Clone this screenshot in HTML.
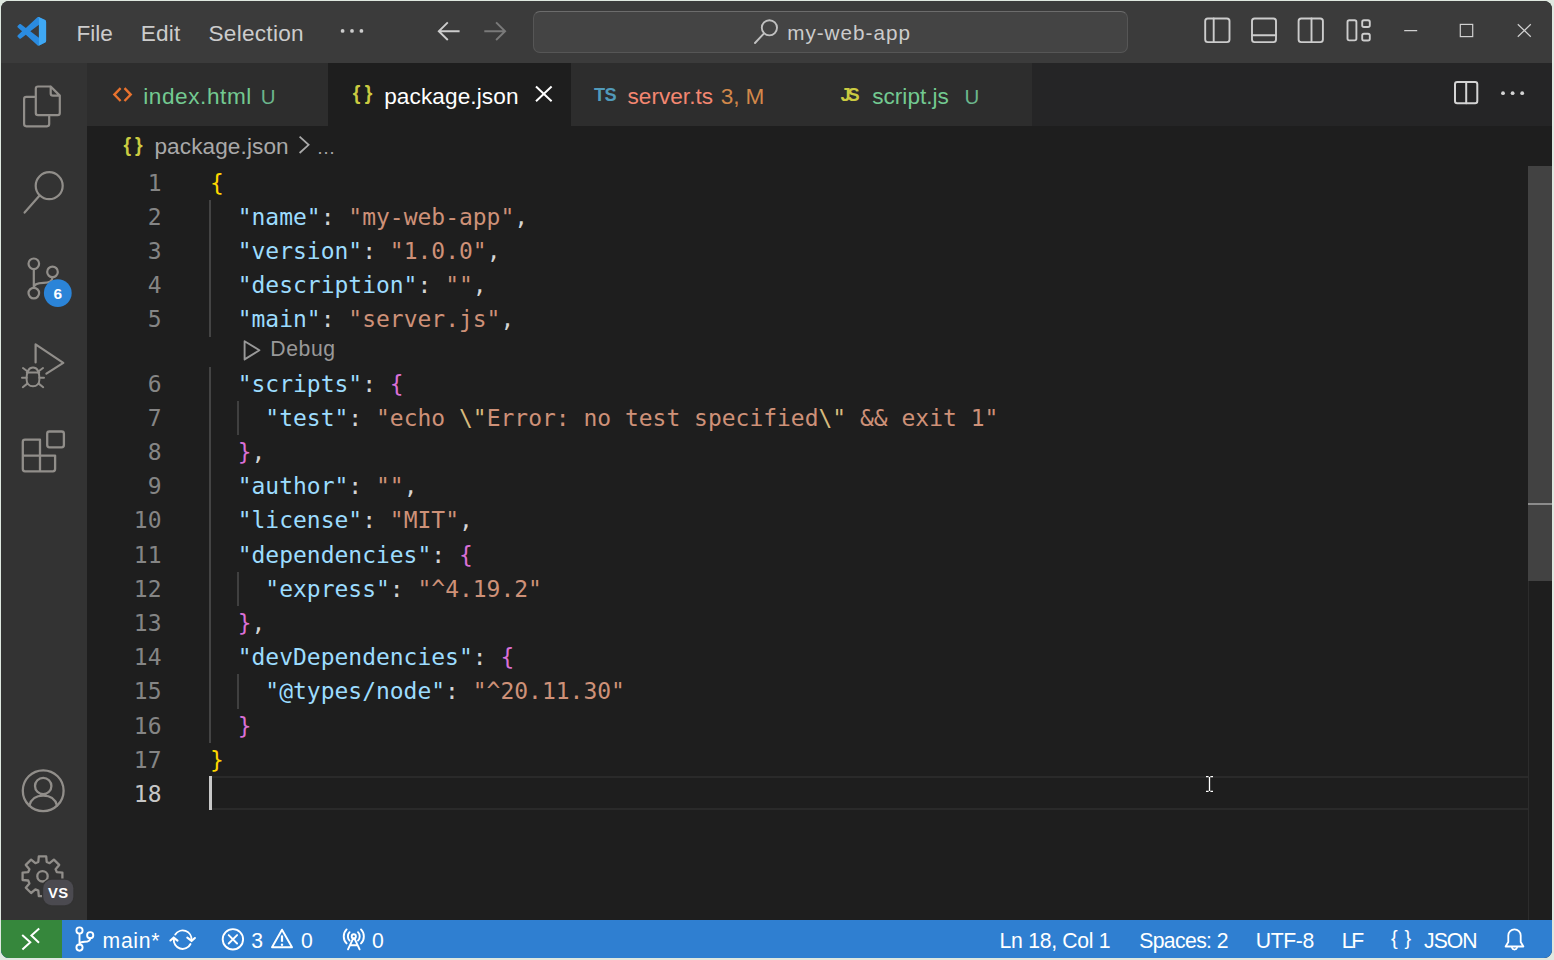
<!DOCTYPE html>
<html lang="en"><head><meta charset="utf-8"><title>package.json - my-web-app - Visual Studio Code</title>
<style>
html,body{margin:0;padding:0}
body{width:1554px;height:960px;overflow:hidden;position:relative;background:#dfe8e0;font-family:'Liberation Sans', sans-serif}
#win{position:absolute;left:1.3px;top:1.2px;width:1550.6px;height:956.6px;border-radius:8px;overflow:hidden;background:#1e1e1e}
#page{position:absolute;left:-1.3px;top:-1.2px;width:1554px;height:960px}
.b{position:absolute}
.t{position:absolute;white-space:pre;line-height:1;margin:0}
.ln{position:absolute;left:100px;width:61.5px;text-align:right;font-family:'DejaVu Sans Mono', 'Liberation Mono', monospace;font-size:22.97px;color:#858585;line-height:34.2px;height:34.2px;white-space:pre}
.cl{position:absolute;left:210px;font-family:'DejaVu Sans Mono', 'Liberation Mono', monospace;font-size:22.97px;line-height:34.2px;height:34.2px;white-space:pre;color:#d4d4d4;letter-spacing:0px}
svg{position:absolute;overflow:visible}
</style></head><body>
<div id="win"><div id="page">
<div class="b" style="left:0;top:0;width:1554px;height:63px;background:#3b3b3b"></div>
<div class="b" style="left:0;top:63px;width:87px;height:857px;background:#333333"></div>
<div class="b" style="left:87px;top:63px;width:1467px;height:63px;background:#252526"></div>
<div class="b" style="left:87px;top:63px;width:944.5px;height:63px;background:#2d2d2d"></div>
<div class="b" style="left:328px;top:63px;width:242.5px;height:63px;background:#1e1e1e"></div>
<div class="b" style="left:0;top:919.6px;width:1554px;height:41px;background:#2f7fd1"></div>
<div class="b" style="left:0;top:919.6px;width:62px;height:41px;background:#36873c"></div>
<div class="b" style="left:533px;top:11px;width:593px;height:39.5px;border:1px solid #565656;border-top-color:#6c6c6c;border-radius:7px;background:#444444;box-sizing:content-box"></div>
<div class="b" style="left:1528px;top:165.6px;width:1px;height:754px;background:#2c2c2c"></div>
<div class="b" style="left:1528px;top:165.6px;width:26px;height:415.5px;background:#424242"></div>
<div class="b" style="left:1528px;top:503px;width:26px;height:2px;background:#8c8c8c"></div>
<div class="b" style="left:210px;top:776.4px;width:1318px;height:33.2px;border-top:2px solid #2a2a2a;border-bottom:2px solid #2a2a2a;box-sizing:border-box"></div>
<div class="b" style="left:209px;top:776.4px;width:3px;height:33.2px;background:#c8c8c8"></div>
<div class="b" style="left:209.3px;top:199.8px;width:2px;height:136.8px;background:#444444"></div>
<div class="b" style="left:209.3px;top:366.6px;width:2px;height:376.2px;background:#444444"></div>
<div class="b" style="left:237.2px;top:400.8px;width:2px;height:34.2px;background:#404040"></div>
<div class="b" style="left:237.2px;top:571.8px;width:2px;height:34.2px;background:#404040"></div>
<div class="b" style="left:237.2px;top:674.4px;width:2px;height:34.2px;background:#404040"></div>
<div class="ln" style="top:165.6px">1</div>
<div class="cl" style="top:165.6px"><span style="color:#ffd700">{</span></div>
<div class="ln" style="top:199.8px">2</div>
<div class="cl" style="top:199.8px"><span style="color:#d4d4d4">  </span><span style="color:#9cdcfe">"name"</span><span style="color:#d4d4d4">: </span><span style="color:#ce9178">"my-web-app"</span><span style="color:#d4d4d4">,</span></div>
<div class="ln" style="top:234.0px">3</div>
<div class="cl" style="top:234.0px"><span style="color:#d4d4d4">  </span><span style="color:#9cdcfe">"version"</span><span style="color:#d4d4d4">: </span><span style="color:#ce9178">"1.0.0"</span><span style="color:#d4d4d4">,</span></div>
<div class="ln" style="top:268.2px">4</div>
<div class="cl" style="top:268.2px"><span style="color:#d4d4d4">  </span><span style="color:#9cdcfe">"description"</span><span style="color:#d4d4d4">: </span><span style="color:#ce9178">""</span><span style="color:#d4d4d4">,</span></div>
<div class="ln" style="top:302.4px">5</div>
<div class="cl" style="top:302.4px"><span style="color:#d4d4d4">  </span><span style="color:#9cdcfe">"main"</span><span style="color:#d4d4d4">: </span><span style="color:#ce9178">"server.js"</span><span style="color:#d4d4d4">,</span></div>
<div class="ln" style="top:366.6px">6</div>
<div class="cl" style="top:366.6px"><span style="color:#d4d4d4">  </span><span style="color:#9cdcfe">"scripts"</span><span style="color:#d4d4d4">: </span><span style="color:#da70d6">{</span></div>
<div class="ln" style="top:400.8px">7</div>
<div class="cl" style="top:400.8px"><span style="color:#d4d4d4">    </span><span style="color:#9cdcfe">"test"</span><span style="color:#d4d4d4">: </span><span style="color:#ce9178">"echo </span><span style="color:#d7ba7d">\"</span><span style="color:#ce9178">Error: no test specified</span><span style="color:#d7ba7d">\"</span><span style="color:#ce9178"> &amp;&amp; exit 1"</span></div>
<div class="ln" style="top:435.0px">8</div>
<div class="cl" style="top:435.0px"><span style="color:#d4d4d4">  </span><span style="color:#da70d6">}</span><span style="color:#d4d4d4">,</span></div>
<div class="ln" style="top:469.2px">9</div>
<div class="cl" style="top:469.2px"><span style="color:#d4d4d4">  </span><span style="color:#9cdcfe">"author"</span><span style="color:#d4d4d4">: </span><span style="color:#ce9178">""</span><span style="color:#d4d4d4">,</span></div>
<div class="ln" style="top:503.4px">10</div>
<div class="cl" style="top:503.4px"><span style="color:#d4d4d4">  </span><span style="color:#9cdcfe">"license"</span><span style="color:#d4d4d4">: </span><span style="color:#ce9178">"MIT"</span><span style="color:#d4d4d4">,</span></div>
<div class="ln" style="top:537.6px">11</div>
<div class="cl" style="top:537.6px"><span style="color:#d4d4d4">  </span><span style="color:#9cdcfe">"dependencies"</span><span style="color:#d4d4d4">: </span><span style="color:#da70d6">{</span></div>
<div class="ln" style="top:571.8px">12</div>
<div class="cl" style="top:571.8px"><span style="color:#d4d4d4">    </span><span style="color:#9cdcfe">"express"</span><span style="color:#d4d4d4">: </span><span style="color:#ce9178">"^4.19.2"</span></div>
<div class="ln" style="top:606.0px">13</div>
<div class="cl" style="top:606.0px"><span style="color:#d4d4d4">  </span><span style="color:#da70d6">}</span><span style="color:#d4d4d4">,</span></div>
<div class="ln" style="top:640.2px">14</div>
<div class="cl" style="top:640.2px"><span style="color:#d4d4d4">  </span><span style="color:#9cdcfe">"devDependencies"</span><span style="color:#d4d4d4">: </span><span style="color:#da70d6">{</span></div>
<div class="ln" style="top:674.4px">15</div>
<div class="cl" style="top:674.4px"><span style="color:#d4d4d4">    </span><span style="color:#9cdcfe">"@types/node"</span><span style="color:#d4d4d4">: </span><span style="color:#ce9178">"^20.11.30"</span></div>
<div class="ln" style="top:708.6px">16</div>
<div class="cl" style="top:708.6px"><span style="color:#d4d4d4">  </span><span style="color:#da70d6">}</span></div>
<div class="ln" style="top:742.8px">17</div>
<div class="cl" style="top:742.8px"><span style="color:#ffd700">}</span></div>
<div class="ln" style="top:777.0px;color:#c6c6c6">18</div>
<svg width="1554" height="960" viewBox="0 0 1554 960" style="left:0;top:0" fill="none" stroke-linecap="round" stroke-linejoin="round">
<g transform="translate(17.4 17) scale(0.287)">
<path fill="#2a8be0" fill-rule="evenodd" d="M70.9 99.3C72.5 99.9 74.3 99.9 75.9 99.1L96.5 89.2C98.6 88.2 100 86 100 83.6V16.4C100 14 98.6 11.8 96.5 10.8L75.9 0.9C73.8 -0.1 71.3 0.1 69.5 1.4C69.3 1.6 69 1.8 68.8 2.1L29.4 38L12.2 25C10.6 23.8 8.4 23.9 6.9 25.2L1.4 30.3C-0.5 31.9 -0.5 34.8 1.4 36.4L16.2 50L1.4 63.6C-0.5 65.2 -0.5 68.1 1.4 69.7L6.9 74.8C8.4 76.1 10.6 76.2 12.2 75L29.4 62L68.8 97.9C69.4 98.5 70.1 99 70.9 99.3ZM75 27.3L45.1 50L75 72.7V27.3Z"/>
<path fill="#3fa8f4" d="M75.9 0.9L96.5 10.8C98.6 11.8 100 14 100 16.4V83.6C100 86 98.6 88.2 96.5 89.2L75.9 99.1C73.9 100.1 71.5 99.8 69.8 98.4C72 99.6 75 98.3 75 95.4V4.6C75 1.7 72 0.4 69.6 1.5C71.4 0.1 73.8 -0.1 75.9 0.9Z"/>
</g>
<circle cx="342.6" cy="30.9" r="1.9" fill="#cccccc"/>
<circle cx="352" cy="30.9" r="1.9" fill="#cccccc"/>
<circle cx="361.4" cy="30.9" r="1.9" fill="#cccccc"/>
<path stroke="#cccccc" stroke-width="1.9" stroke-linecap="butt" stroke-linejoin="miter" d="M459.6 31.2H439.5M447.8 22.4L438.8 31.2L447.8 40"/>
<path stroke="#7a7a7a" stroke-width="1.9" stroke-linecap="butt" stroke-linejoin="miter" d="M484.3 31.2H504.4M496.1 22.4L505.1 31.2L496.1 40"/>
<g stroke="#c0c0c0" stroke-width="1.9"><circle cx="769.4" cy="27.8" r="7.6"/><path d="M764 33.4L755 43"/></g>
<g stroke="#cccccc" stroke-width="1.9">
<rect x="1205.2" y="18.5" width="24.3" height="23.6" rx="2.6"/><path d="M1213.7 18.5V42.1"/>
<rect x="1252" y="18.5" width="24" height="23.6" rx="2.6"/><path d="M1252 35.3H1276"/>
<rect x="1298.6" y="18.5" width="24.3" height="23.6" rx="2.6"/><path d="M1311.5 18.5V42.1"/>
<rect x="1347.5" y="20.2" width="8.9" height="20.2" rx="1.8"/><rect x="1362.2" y="20.2" width="7.6" height="6.8" rx="1.8"/><rect x="1362.2" y="33.7" width="7.6" height="6.8" rx="1.8"/>
</g>
<g stroke="#d0d0d0" stroke-width="1.2" stroke-linecap="butt" stroke-linejoin="miter">
<path d="M1404.2 30.6H1417.2"/>
<rect x="1460.3" y="24.4" width="12.4" height="12.2"/>
<path d="M1517.8 24.2L1530.8 36.8M1530.8 24.2L1517.8 36.8"/>
</g>
<path stroke="#e8722e" stroke-width="2.4" stroke-linecap="butt" stroke-linejoin="miter" d="M120.6 88.2L114.4 94.6L120.6 101M124.5 88.2L130.7 94.6L124.5 101"/>
<path stroke="#ffffff" stroke-width="2" stroke-linecap="butt" d="M536 86.4L551.6 101.2M551.6 86.4L536 101.2"/>
<g stroke="#d4d4d4" stroke-width="2"><rect x="1455" y="82" width="22.3" height="21.3" rx="2.2"/><path d="M1466.2 82V103.3"/></g>
<circle cx="1503" cy="93.2" r="1.9" fill="#d4d4d4"/>
<circle cx="1512.6" cy="93.2" r="1.9" fill="#d4d4d4"/>
<circle cx="1522.2" cy="93.2" r="1.9" fill="#d4d4d4"/>
<path stroke="#a9a9a9" stroke-width="1.8" stroke-linecap="butt" stroke-linejoin="miter" d="M299.6 136.6L308.6 144.8L299.6 153"/>
<path stroke="#999999" stroke-width="1.9" d="M244.6 341.2L259.4 350.3L244.6 359.4Z"/>
<g stroke="#918e8a" stroke-width="2.2">
<path d="M50.7 86.5H38A2.2 2.2 0 0 0 35.8 88.7V113A2.2 2.2 0 0 0 38 115.2H57.6A2.2 2.2 0 0 0 59.8 113V95.6L50.7 86.5V93.4A2.2 2.2 0 0 0 52.9 95.6H59.8"/>
<path d="M34.5 96.8H26.3A2.2 2.2 0 0 0 24.1 99V124.1A2.2 2.2 0 0 0 26.3 126.3H47A2.2 2.2 0 0 0 49.2 124.1V116.4"/>
<circle cx="49.2" cy="185.7" r="13.5"/><path d="M39.6 195.6L24.6 212.6"/>
<circle cx="33.8" cy="263.8" r="5.3"/><circle cx="52.5" cy="271.9" r="5.3"/><circle cx="33.8" cy="293.1" r="5.3"/>
<path d="M33.8 269.1V287.8M52.5 277.2C52.5 281.5 48.5 282.8 43.5 282.8C38 282.8 33.8 284 33.8 287.8"/>
<path d="M35.6 362.5V344.3L63.3 362.9L46.4 373.6"/>
</g>
<g stroke="#918e8a" stroke-width="2">
<path d="M26.6 379.5C26.6 372.5 28.5 367.6 33 367.6C37.5 367.6 39.4 372.5 39.4 379.5C39.4 383.5 36.8 386.3 33 386.3C29.2 386.3 26.6 383.5 26.6 379.5Z"/>
<path d="M26.8 372.6H39.2M22 377.8H26.6M39.4 377.8H44M23 368L27.3 371.2M43 368L38.7 371.2M22.8 387.2L27.3 383.6M43.2 387.2L38.7 383.6"/>
</g>
<g stroke="#918e8a" stroke-width="2.3">
<path d="M40 439.7H25A2.2 2.2 0 0 0 22.8 441.9V469.1A2.2 2.2 0 0 0 25 471.3H52.9A2.2 2.2 0 0 0 55.1 469.1V455.6H22.8M40 439.7V471.3"/>
<rect x="47.2" y="431.5" width="16.7" height="15.8" rx="2.2"/>
<circle cx="43.2" cy="790.7" r="20.4"/><circle cx="43.2" cy="786" r="8.2"/><path d="M29.4 805.6C31 799 36 795.6 43.2 795.6C50.4 795.6 55.4 799 57 805.6"/>
<path d="M38.3 862L38.8 856.4L46.2 856.4L46.7 862L49.6 863.2L53.9 859.6L59.2 864.9L55.6 869.2L56.8 872.1L62.4 872.6L62.4 880L56.8 880.5L55.6 883.4L59.2 887.7L53.9 893L49.6 889.4L46.7 890.6L46.2 896.2L38.8 896.2L38.3 890.6L35.4 889.4L31.1 893L25.8 887.7L29.4 883.4L28.2 880.5L22.6 880L22.6 872.6L28.2 872.1L29.4 869.2L25.8 864.9L31.1 859.6L35.4 863.2Z"/>
<circle cx="42.5" cy="876.3" r="5.2"/>
</g>
<circle cx="57.8" cy="293.1" r="13.9" fill="#2b84d8"/>
<rect x="43.2" y="879.7" width="30.1" height="25.6" rx="8.5" fill="#4b4a50" stroke="#333333" stroke-width="2.4" paint-order="stroke"/>
<g stroke="#ffffff" stroke-width="2" stroke-linecap="butt" stroke-linejoin="miter">
<path d="M22.2 934.9L30.3 942.2L22.4 949.4M39.2 928.4L31.4 935.5L39 942.7"/>
</g>
<g stroke="#ffffff" stroke-width="1.9">
<circle cx="79.5" cy="930.5" r="3.1"/><circle cx="90.2" cy="935.2" r="3.1"/><circle cx="79.5" cy="947.6" r="3.1"/>
<path d="M79.5 933.6V944.5M90.2 938.3C90.2 941.3 87.5 941.8 84.8 941.8C81.5 941.8 79.5 942.5 79.5 944.5"/>
<path d="M175.3 934.6A8.8 8.8 0 0 1 191.5 940M190.5 944A8.8 8.8 0 0 1 173.9 938.8"/>
<path stroke-width="2.1" stroke-linejoin="miter" d="M187.3 937.7L191.6 940.9L194.9 938M170.4 940.5L173.7 937.7L177.5 940.6"/>
<circle cx="232.9" cy="939.3" r="10.2"/><path d="M228.7 935.1L237.1 943.5M237.1 935.1L228.7 943.5"/>
<path d="M282 929.7L292 947.3H272Z"/><path stroke-width="2.2" stroke-linecap="butt" d="M282 935.4V941.8"/><circle cx="282" cy="944.7" r="1.2" fill="#ffffff" stroke="none"/>
<circle cx="353.8" cy="936.4" r="2.1"/><path d="M353.2 938.4L348 949.3M354.4 938.4L359.6 949.3M350.2 945.2H357.4"/>
<path d="M349.6 932.2A6 6 0 0 0 349.6 940.6M358 932.2A6 6 0 0 1 358 940.6M346.6 929.4A10 10 0 0 0 346.6 943.4M361 929.4A10 10 0 0 1 361 943.4"/>
</g>
<g stroke="#ffffff" stroke-width="1.8">
<path d="M1505.6 946.5L1508.3 942V935.5A6.2 6.2 0 0 1 1520.7 935.5V942L1523.4 946.5Z"/><path d="M1511.9 947.6A2.7 2.7 0 0 0 1517.1 947.6"/>
</g>
<path stroke="#ffffff" stroke-width="1.3" stroke-linecap="butt" d="M1206 776.6H1208.6M1210.4 776.6H1213M1206 791.4H1208.6M1210.4 791.4H1213M1209.5 777V791"/>
</svg>
<div class="t" id="t0" style="left:76.4px;top:23.0px;font-size:22.6px;color:#cccccc;font-family:'Liberation Sans', sans-serif;font-weight:400;letter-spacing:0.042px">File</div>
<div class="t" id="t1" style="left:140.8px;top:23.0px;font-size:22.6px;color:#cccccc;font-family:'Liberation Sans', sans-serif;font-weight:400;letter-spacing:0.182px">Edit</div>
<div class="t" id="t2" style="left:208.5px;top:23.0px;font-size:22.6px;color:#cccccc;font-family:'Liberation Sans', sans-serif;font-weight:400;letter-spacing:0.267px">Selection</div>
<div class="t" id="t3" style="left:787.2px;top:22.7px;font-size:20.7px;color:#cccccc;font-family:'Liberation Sans', sans-serif;font-weight:400;letter-spacing:0.990px">my-web-app</div>
<div class="t" id="t4" style="left:143.2px;top:85.7px;font-size:22.6px;color:#73c991;font-family:'Liberation Sans', sans-serif;font-weight:400;letter-spacing:0.580px">index.html</div>
<div class="t" id="t5" style="left:260.7px;top:86.7px;font-size:20.5px;color:#6bb58c;font-family:'Liberation Sans', sans-serif;font-weight:400;letter-spacing:0.000px">U</div>
<div class="t" id="t6" style="left:384.2px;top:85.7px;font-size:22.6px;color:#ffffff;font-family:'Liberation Sans', sans-serif;font-weight:400;letter-spacing:0.103px">package.json</div>
<div class="t" id="t7" style="left:627.5px;top:85.7px;font-size:22.6px;color:#f48771;font-family:'Liberation Sans', sans-serif;font-weight:400;letter-spacing:0.017px">server.ts</div>
<div class="t" id="t8" style="left:720.8px;top:85.7px;font-size:22.6px;color:#d2884a;font-family:'Liberation Sans', sans-serif;font-weight:400;letter-spacing:-0.103px">3, M</div>
<div class="t" id="t9" style="left:872.2px;top:85.7px;font-size:22.6px;color:#73c991;font-family:'Liberation Sans', sans-serif;font-weight:400;letter-spacing:0.018px">script.js</div>
<div class="t" id="t10" style="left:964.5px;top:86.7px;font-size:20.5px;color:#6bb58c;font-family:'Liberation Sans', sans-serif;font-weight:400;letter-spacing:0.000px">U</div>
<div class="t" id="t11" style="left:594.1px;top:86.1px;font-size:18.2px;color:#519aba;font-family:'Liberation Sans', sans-serif;font-weight:700;letter-spacing:-0.606px">TS</div>
<div class="t" id="t12" style="left:840.6px;top:86.1px;font-size:18.2px;color:#cbcb41;font-family:'Liberation Sans', sans-serif;font-weight:700;letter-spacing:-3.159px">JS</div>
<div class="t" id="t13" style="left:352.8px;top:83.8px;font-size:19.5px;color:#cbcb41;font-family:'Liberation Sans', sans-serif;font-weight:700;letter-spacing:4.263px">{}</div>
<div class="t" id="t14" style="left:123.5px;top:135.6px;font-size:19.5px;color:#cbcb41;font-family:'Liberation Sans', sans-serif;font-weight:700;letter-spacing:3.863px">{}</div>
<div class="t" id="t15" style="left:1390.9px;top:928.3px;font-size:20px;color:#ffffff;font-family:'Liberation Sans', sans-serif;font-weight:400;letter-spacing:6.851px">{}</div>
<div class="t" id="t16" style="left:154.4px;top:135.8px;font-size:22.6px;color:#a9a9a9;font-family:'Liberation Sans', sans-serif;font-weight:400;letter-spacing:0.103px">package.json</div>
<div class="t" id="t17" style="left:316.4px;top:137.8px;font-size:19px;color:#a9a9a9;font-family:'Liberation Sans', sans-serif;font-weight:400;letter-spacing:0.000px">…</div>
<div class="t" id="t18" style="left:270.3px;top:338.3px;font-size:21.2px;color:#999999;font-family:'Liberation Sans', sans-serif;font-weight:400;letter-spacing:0.584px">Debug</div>
<div class="t" id="t19" style="left:102.6px;top:929.5px;font-size:21.2px;color:#ffffff;font-family:'Liberation Sans', sans-serif;font-weight:400;letter-spacing:0.668px">main*</div>
<div class="t" id="t20" style="left:251.2px;top:929.5px;font-size:21.2px;color:#ffffff;font-family:'Liberation Sans', sans-serif;font-weight:400;letter-spacing:0.000px">3</div>
<div class="t" id="t21" style="left:301.0px;top:929.5px;font-size:21.2px;color:#ffffff;font-family:'Liberation Sans', sans-serif;font-weight:400;letter-spacing:0.000px">0</div>
<div class="t" id="t22" style="left:372.0px;top:929.5px;font-size:21.2px;color:#ffffff;font-family:'Liberation Sans', sans-serif;font-weight:400;letter-spacing:0.000px">0</div>
<div class="t" id="t23" style="left:999.6px;top:929.5px;font-size:21.2px;color:#ffffff;font-family:'Liberation Sans', sans-serif;font-weight:400;letter-spacing:-0.294px">Ln 18, Col 1</div>
<div class="t" id="t24" style="left:1139.2px;top:929.5px;font-size:21.2px;color:#ffffff;font-family:'Liberation Sans', sans-serif;font-weight:400;letter-spacing:-0.623px">Spaces: 2</div>
<div class="t" id="t25" style="left:1255.8px;top:929.5px;font-size:21.2px;color:#ffffff;font-family:'Liberation Sans', sans-serif;font-weight:400;letter-spacing:-0.372px">UTF-8</div>
<div class="t" id="t26" style="left:1341.7px;top:929.5px;font-size:21.2px;color:#ffffff;font-family:'Liberation Sans', sans-serif;font-weight:400;letter-spacing:-2.296px">LF</div>
<div class="t" id="t27" style="left:1424.0px;top:929.5px;font-size:21.2px;color:#ffffff;font-family:'Liberation Sans', sans-serif;font-weight:400;letter-spacing:-0.945px">JSON</div>
<div class="t" id="t28" style="left:53.5px;top:286.0px;font-size:15.4px;color:#ffffff;font-family:'Liberation Sans', sans-serif;font-weight:700;letter-spacing:0.000px">6</div>
<div class="t" id="t29" style="left:48.1px;top:885.9px;font-size:14.8px;color:#ffffff;font-family:'Liberation Sans', sans-serif;font-weight:700;letter-spacing:0.257px">VS</div>
</div></div>
</body></html>
